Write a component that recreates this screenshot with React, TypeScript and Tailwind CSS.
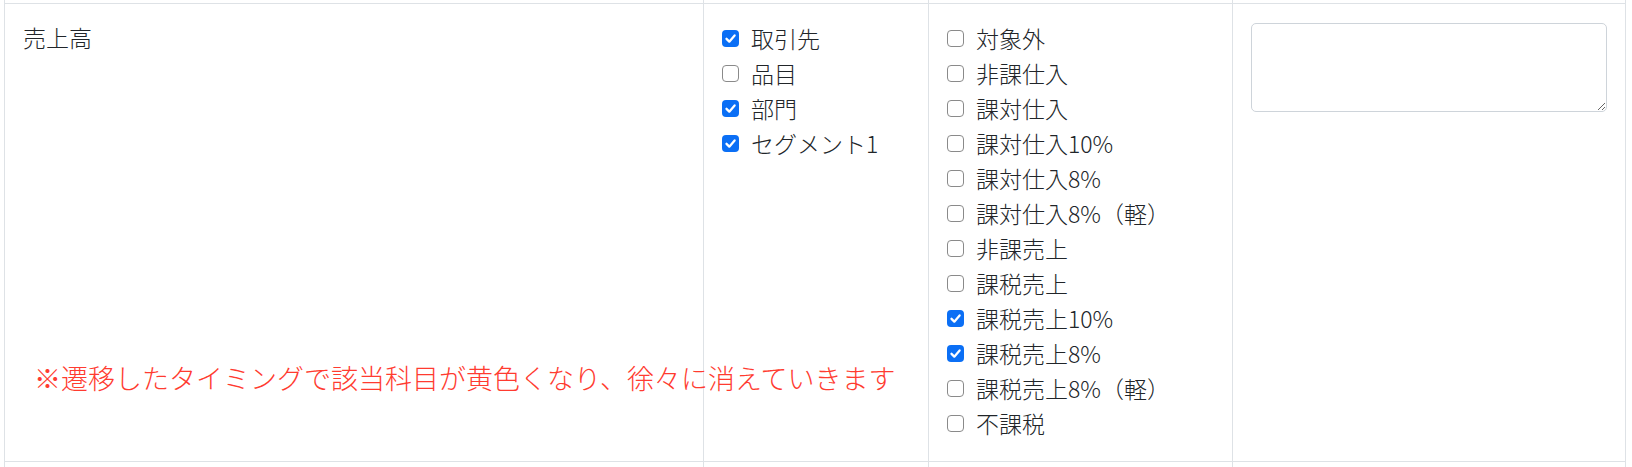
import React from "react";

const font = { fontFamily: '"Noto Sans CJK JP", "Noto Sans", sans-serif' };

function Box({ checked }: { checked: boolean }) {
  if (checked) {
    return (
      <span className="flex h-[17px] w-[17px] shrink-0 items-center justify-center rounded-[4px] bg-[#0b6ff5]">
        <svg width="13" height="13" viewBox="0 0 12 12">
          <path d="M2.3 6.3 L4.9 8.9 L9.8 3.2" fill="none" stroke="#fff" strokeWidth="2.1" strokeLinecap="round" strokeLinejoin="round" />
        </svg>
      </span>
    );
  }
  return <span className="block h-[17px] w-[17px] shrink-0 rounded-[4px] border border-[#8a8a8a] bg-white" />;
}

function Item({ label, checked }: { label: string; checked: boolean }) {
  return (
    <div className="flex h-[35px] items-center">
      <Box checked={checked} />
      <span className="ml-[12px] whitespace-nowrap">{label}</span>
    </div>
  );
}

const col2: [string, boolean][] = [
  ["取引先", true],
  ["品目", false],
  ["部門", true],
  ["セグメント1", true],
];

const col3: [string, boolean][] = [
  ["対象外", false],
  ["非課仕入", false],
  ["課対仕入", false],
  ["課対仕入10%", false],
  ["課対仕入8%", false],
  ["課対仕入8%（軽）", false],
  ["非課売上", false],
  ["課税売上", false],
  ["課税売上10%", true],
  ["課税売上8%", true],
  ["課税売上8%（軽）", false],
  ["不課税", false],
];

export default function App() {
  return (
    <div className="relative h-[467px] w-[1632px] overflow-hidden bg-white text-[23px] font-light leading-[35px] text-[#212529]" style={font}>
      <div className="ml-[4px] w-[1622px] border-l border-[#dee2e6]">
        <div className="grid h-[3px] grid-cols-[699px_225px_304px_393px]">
          <div className="border-r border-[#dee2e6]" />
          <div className="border-r border-[#dee2e6]" />
          <div className="border-r border-[#dee2e6]" />
          <div className="border-r border-[#dee2e6]" />
        </div>
        <div className="grid h-[459px] grid-cols-[699px_225px_304px_393px] border-y border-[#dee2e6]">
          <div className="border-r border-[#dee2e6] pl-[18px] pt-[16px]">売上高</div>
          <div className="border-r border-[#dee2e6] pl-[18px] pt-[17px]">
            {col2.map(([l, c]) => (
              <Item key={l} label={l} checked={c} />
            ))}
          </div>
          <div className="border-r border-[#dee2e6] pl-[18px] pt-[17px]">
            {col3.map(([l, c]) => (
              <Item key={l} label={l} checked={c} />
            ))}
          </div>
          <div className="border-r border-[#dee2e6] px-[18px] pt-[19px]">
            <textarea className="block h-[89px] w-[356px] resize-y rounded-[5px] border border-[#ced4da] bg-white" />
          </div>
        </div>
        <div className="grid h-[5px] grid-cols-[699px_225px_304px_393px]">
          <div className="border-r border-[#dee2e6]" />
          <div className="border-r border-[#dee2e6]" />
          <div className="border-r border-[#dee2e6]" />
          <div className="border-r border-[#dee2e6]" />
        </div>
      </div>
      <div className="absolute left-[34px] top-[360px] whitespace-nowrap text-[27px] leading-[36px] text-[#ff3b30]">
        ※遷移したタイミングで該当科目が黄色くなり、徐々に消えていきます
      </div>
    </div>
  );
}
